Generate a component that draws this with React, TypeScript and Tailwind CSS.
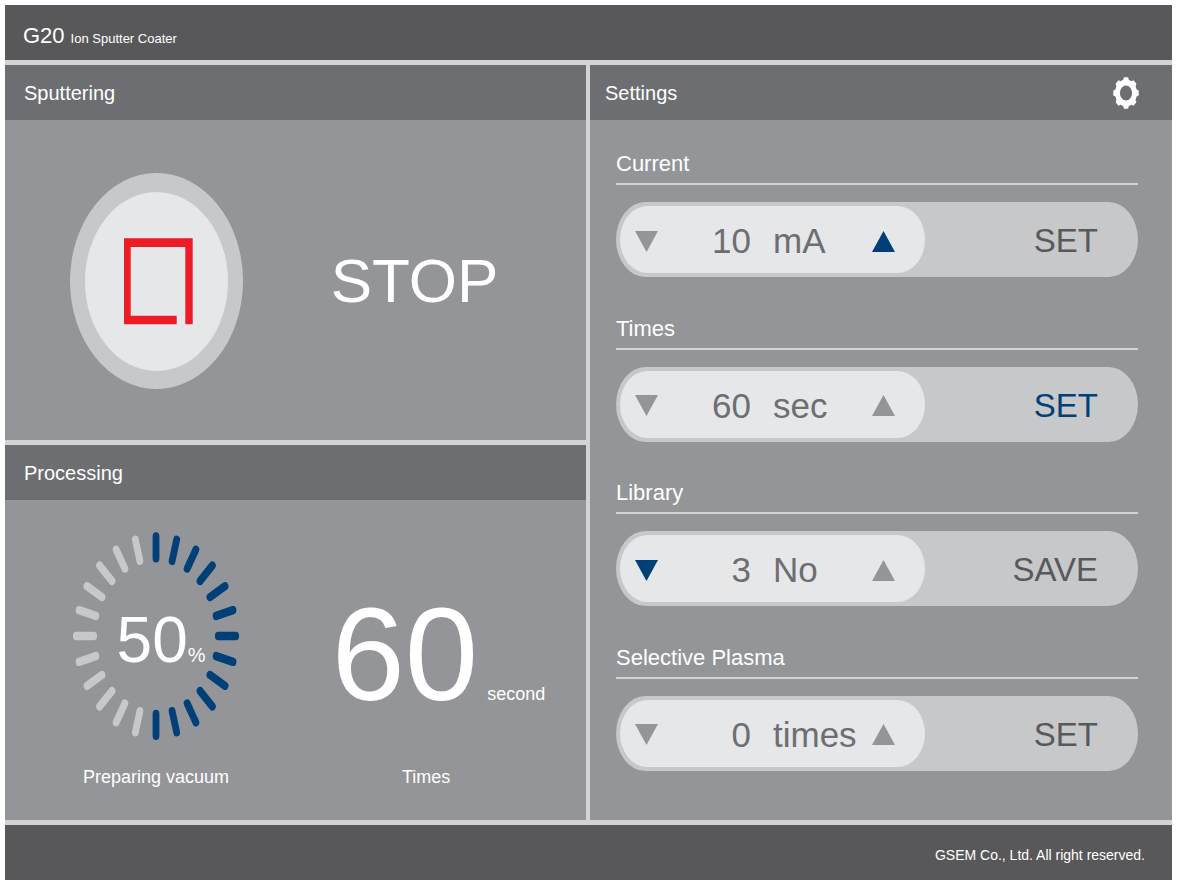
import React, { useState } from "react";

type Active = "down" | "up" | "action" | "none";

interface Setting {
  id: string;
  title: string;
  value: number;
  unit: string;
  action: string;
  active: Active;
}

const SETTINGS: Setting[] = [
  { id: "current", title: "Current", value: 10, unit: "mA", action: "SET", active: "up" },
  { id: "times", title: "Times", value: 60, unit: "sec", action: "SET", active: "action" },
  { id: "library", title: "Library", value: 3, unit: "No", action: "SAVE", active: "down" },
  { id: "plasma", title: "Selective Plasma", value: 0, unit: "times", action: "SET", active: "none" },
];

function PanelHeader({ title, children }: { title: string; children?: React.ReactNode }) {
  return (
    <div className="flex h-[55px] shrink-0 items-center justify-between bg-[#6d6e71] pr-[33px]">
      <h2 className="text-[20px] leading-[28px]">{title}</h2>
      {children}
    </div>
  );
}

function GearIcon() {
  const teeth = [0, 45, 90, 135, 180, 225, 270, 315];
  return (
    <svg viewBox="-13 -13 26 26" preserveAspectRatio="none" className="h-[32px] w-[26px]" aria-hidden="true">
      <circle r="8.5" fill="none" stroke="#fff" strokeWidth="4.8" />
      {teeth.map((a) => (
        <path key={a} d="M-2.9 -10 L-2.4 -12 Q-2.2 -12.7 -1.5 -12.7 H1.5 Q2.2 -12.7 2.4 -12 L2.9 -10 Z" fill="#fff" transform={`rotate(${a})`} />
      ))}
    </svg>
  );
}

function StopIcon() {
  return (
    <svg viewBox="0 0 173 216" className="h-[216px] w-[173px]" aria-hidden="true">
      <ellipse cx="86.5" cy="108" rx="86.5" ry="108" fill="#c7c8ca" />
      <ellipse cx="86.5" cy="108.5" rx="71.5" ry="89.5" fill="#e6e7e9" />
      <path d="M54 65.3H122.7V151.3H115.3V74H60.7V142.7H106.7V151.3H54Z" fill="#ed1c24" />
    </svg>
  );
}

function Dial({ percent }: { percent: number }) {
  const ticks = Array.from({ length: 24 }, (_, i) => i);
  const lit = (percent / 100) * 24;
  return (
    <div className="grid place-items-center">
      <svg viewBox="-84 -84 168 168" preserveAspectRatio="none" className="h-[210px] w-[168px] [grid-area:1/1]" aria-hidden="true">
        {ticks.map((i) => (
          <line
            key={i}
            y1="-62.3"
            y2="-79.7"
            stroke={i <= lit ? "#003f77" : "#c7c8ca"}
            strokeWidth="6.8"
            strokeLinecap="round"
            transform={`rotate(${i * 15})`}
          />
        ))}
      </svg>
      <p className="flex items-baseline pt-2 pl-[10px] [grid-area:1/1]">
        <span className="text-[64px] leading-none">{percent}</span>
        <span className="text-[20px] leading-none">%</span>
      </p>
    </div>
  );
}

function Triangle({ up, lit }: { up?: boolean; lit: boolean }) {
  return (
    <svg viewBox="0 0 23 21" className="h-[21px] w-[23px]" aria-hidden="true">
      <path d={up ? "M11.5 0L23 21H0Z" : "M0 0H23L11.5 21Z"} fill={lit ? "#003f77" : "#939598"} />
    </svg>
  );
}

function SettingRow({ item }: { item: Setting }) {
  const [value, setValue] = useState(item.value);
  return (
    <section aria-labelledby={item.id}>
      <h3 id={item.id} className="border-b-2 border-[#d1d3d4] pb-[4px] text-[22px] leading-[30px]">
        {item.title}
      </h3>
      <div className="mt-[17px] grid h-[75px] grid-cols-[305fr_209fr] rounded-[30px/38px] bg-[#c7c8ca] p-1">
        <div className="grid grid-cols-[52px_1fr_84px_52px] items-center rounded-[28px/34px] bg-[#e6e7e9] pt-[3px] pr-[16px] text-[35px] leading-[44px] text-[#6d6e71]">
          <button type="button" aria-label={`Decrease ${item.title}`} className="flex justify-center" onClick={() => setValue(Math.max(0, value - 1))}>
            <Triangle lit={item.active === "down"} />
          </button>
          <output aria-labelledby={item.id} className="pr-[22px] text-right">{value}</output>
          <span>{item.unit}</span>
          <button type="button" aria-label={`Increase ${item.title}`} className="flex justify-center" onClick={() => setValue(value + 1)}>
            <Triangle up lit={item.active === "up"} />
          </button>
        </div>
        <button
          type="button"
          className={`pt-[3px] pr-[36px] text-right text-[33px] leading-[44px] ${item.active === "action" ? "text-[#003f77]" : "text-[#58595b]"}`}
        >
          {item.action}
        </button>
      </div>
    </section>
  );
}

export default function App() {
  return (
    <div className="flex min-h-screen flex-col bg-white p-[5px] font-['Liberation_Sans',Arial,sans-serif] text-white">
      <div className="flex flex-1 flex-col gap-[5px] bg-[#d1d3d4]">
        <header className="flex h-[55px] items-center bg-[#58585a] pl-[18px]">
          <h1 className="flex items-baseline gap-[6px] pt-[6px]">
            <span className="text-[22px] leading-[28px]">G20</span>
            <span className="text-[13px] leading-[20px]">Ion Sputter Coater</span>
          </h1>
        </header>

        <main className="grid flex-1 grid-cols-[581fr_582fr] gap-[4px]">
          <div className="grid grid-rows-2 gap-[5px]">
            <section className="flex flex-col bg-[#939598] [&>div:first-child]:pl-[19px]">
              <PanelHeader title="Sputtering" />
              <div className="grid flex-1 grid-cols-[52%_37%] place-items-center pt-[2px]">
                <button type="button" aria-label="Stop sputtering">
                  <StopIcon />
                </button>
                <p className="text-[62px] leading-none">STOP</p>
              </div>
            </section>
            <section className="flex flex-col bg-[#939598] [&>div:first-child]:pl-[19px]">
              <PanelHeader title="Processing" />
              <div className="grid flex-1 grid-cols-[52%_41%] content-start pt-[31px] text-center text-[18px] leading-[26px]">
                <div>
                  <Dial percent={50} />
                  <p className="mt-[23px]">Preparing vacuum</p>
                </div>
                <div>
                  <p className="flex h-[210px] items-baseline justify-end gap-[9px] pt-[58px]">
                    <span className="text-[132px] leading-none">60</span>
                    <span>second</span>
                  </p>
                  <p className="mt-[23px]">Times</p>
                </div>
              </div>
            </section>
          </div>

          <section className="flex flex-col bg-[#939598] [&>div:first-child]:pl-[15px]">
            <PanelHeader title="Settings">
              <button type="button" aria-label="Open settings">
                <GearIcon />
              </button>
            </PanelHeader>
            <div className="flex flex-1 flex-col justify-between pt-[29px] pr-[34px] pb-[49px] pl-[26px]">
              {SETTINGS.map((item) => (
                <SettingRow key={item.id} item={item} />
              ))}
            </div>
          </section>
        </main>

        <footer className="flex h-[55px] items-center justify-end bg-[#58585a] pt-1 pr-[27px] text-[14px] leading-[20px]">
          <p>GSEM Co., Ltd. All right reserved.</p>
        </footer>
      </div>
    </div>
  );
}
